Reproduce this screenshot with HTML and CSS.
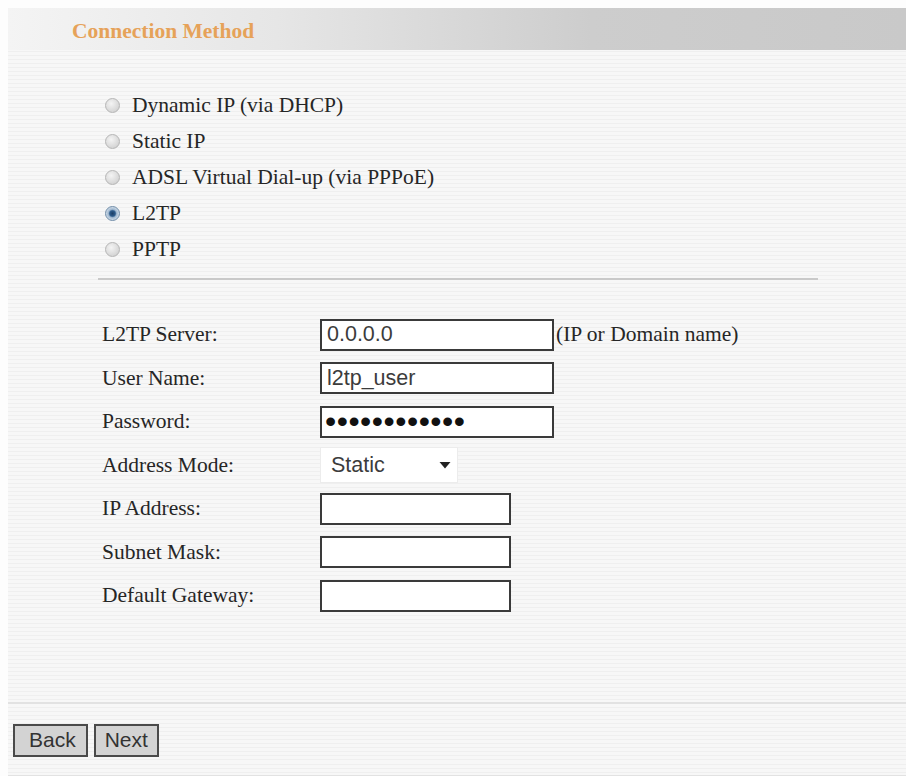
FILE: index.html
```html
<!DOCTYPE html>
<html lang="en">
<head>
  <meta charset="UTF-8">
  <meta name="viewport" content="width=device-width, initial-scale=1.0">
  <title>Connection Method</title>
  <link rel="stylesheet" href="styles.css">
</head>
<body>
  <div class="panel">
    <div class="panel-head">Connection Method</div>

    <div class="methods">
      <label class="method"><input type="radio" name="wan"> Dynamic IP (via DHCP)</label>
      <label class="method"><input type="radio" name="wan"> Static IP</label>
      <label class="method"><input type="radio" name="wan"> ADSL Virtual Dial-up (via PPPoE)</label>
      <label class="method"><input type="radio" name="wan" checked> L2TP</label>
      <label class="method"><input type="radio" name="wan"> PPTP</label>
    </div>

    <hr class="divider">

    <div class="fields">
      <div class="field-row">
        <span class="field-label">L2TP Server:</span>
        <div class="field-value">
          <input class="text-box wide" type="text" value="0.0.0.0">
          <span class="hint">(IP or Domain name)</span>
        </div>
      </div>
      <div class="field-row">
        <span class="field-label">User Name:</span>
        <div class="field-value">
          <input class="text-box wide" type="text" value="l2tp_user">
        </div>
      </div>
      <div class="field-row">
        <span class="field-label">Password:</span>
        <div class="field-value">
          <input class="text-box wide secret" type="password" value="l2tppassword">
        </div>
      </div>
      <div class="field-row">
        <span class="field-label">Address Mode:</span>
        <div class="field-value">
          <div class="select-box">
            <span>Static</span>
            <svg width="12" height="8" viewBox="0 0 12 8"><path d="M0.5 1h11L6 7.5z" fill="#222"/></svg>
          </div>
        </div>
      </div>
      <div class="field-row">
        <span class="field-label">IP Address:</span>
        <div class="field-value">
          <input class="text-box" type="text" value="">
        </div>
      </div>
      <div class="field-row">
        <span class="field-label">Subnet Mask:</span>
        <div class="field-value">
          <input class="text-box" type="text" value="">
        </div>
      </div>
      <div class="field-row">
        <span class="field-label">Default Gateway:</span>
        <div class="field-value">
          <input class="text-box" type="text" value="">
        </div>
      </div>
    </div>
  </div>

  <div class="actions">
    <button class="btn back" type="button">Back</button>
    <button class="btn" type="button">Next</button>
  </div>
  <div class="foot"></div>
</body>
</html>
```

FILE: styles.css
```css
body {
  margin: 0;
  background-color: #fdfdfd;
  font-family: "Liberation Serif", "Times New Roman", serif;
  font-size: 21.5px;
  color: #262626;
}

/* faint scan-like horizontal stripes */
.panel,
.actions,
.foot {
  background: repeating-linear-gradient(to bottom, #f7f7f7 0, #f7f7f7 3px, #efefef 3px, #efefef 4px);
}

.panel {
  margin: 8px 0 0 8px;
  padding-bottom: 84px;
  border-bottom: 2px solid #e2e2e2;
}

.panel-head {
  height: 42px;
  line-height: 46px;
  padding-left: 64px;
  font-weight: bold;
  color: #e6a259;
  background: linear-gradient(to right, #f4f4f4 0%, #e6e6e6 30%, #cdcdcd 65%, #c9c9c9 100%);
}

.methods {
  display: flex;
  flex-direction: column;
  padding: 37px 0 0 97px;
}

.method {
  display: flex;
  align-items: center;
  gap: 12px;
  height: 36px;
}

.method input {
  appearance: none;
  margin: 0;
  width: 15px;
  height: 15px;
  border-radius: 50%;
  border: 1px solid #b5b5b5;
  background: radial-gradient(circle at 40% 35%, #f4f4f4 0%, #d6d6d6 70%, #c4c4c4 100%);
}

.method input:checked {
  border-color: #6f8ca8;
  background: radial-gradient(circle, #1d3f66 0%, #2c5a8a 30%, #9fb7cf 45%, #dfe8f0 80%);
}

.divider {
  margin: 11px 0 0 90px;
  width: 720px;
  border: 0;
  border-top: 2px solid #c9c9c9;
}

.fields {
  display: flex;
  flex-direction: column;
  padding: 33px 0 0 94px;
}

.field-row {
  display: grid;
  grid-template-columns: 218px auto;
  align-items: center;
  height: 43.5px;
}

.field-value {
  display: flex;
  align-items: center;
}

.text-box {
  box-sizing: border-box;
  width: 191px;
  height: 32px;
  margin: 0;
  padding: 0 5px;
  border: 2px solid #3a3a3a;
  background-color: #fff;
  font-family: "Liberation Sans", Arial, sans-serif;
  font-size: 21.5px;
  color: #3c3c3c;
}

.text-box.wide {
  width: 234px;
}

.text-box.secret {
  font-size: 32px;
  line-height: 1;
  letter-spacing: 0.5px;
  padding-left: 3px;
  color: #111;
}

.hint {
  margin-left: 2px;
}

.select-box {
  box-sizing: border-box;
  width: 138px;
  height: 36px;
  display: flex;
  align-items: center;
  justify-content: space-between;
  padding: 0 6px 0 10px;
  background-color: #fff;
  border: 1px solid #ececec;
  font-family: "Liberation Sans", Arial, sans-serif;
  font-size: 21.5px;
  color: #3c3c3c;
}

.actions {
  display: flex;
  gap: 6px;
  padding: 20px 0 4px 5px;
  margin-left: 8px;
}

.btn {
  height: 33px;
  padding: 0 9px;
  border: 2px solid #4a4a4a;
  background-color: #d3d3d3;
  font-family: "Liberation Sans", Arial, sans-serif;
  font-size: 21px;
  color: #333;
}

.btn.back {
  padding: 0 10px 0 14px;
}

.foot {
  margin-left: 8px;
  height: 14px;
  border-bottom: 2px solid #e2e2e2;
}
```
